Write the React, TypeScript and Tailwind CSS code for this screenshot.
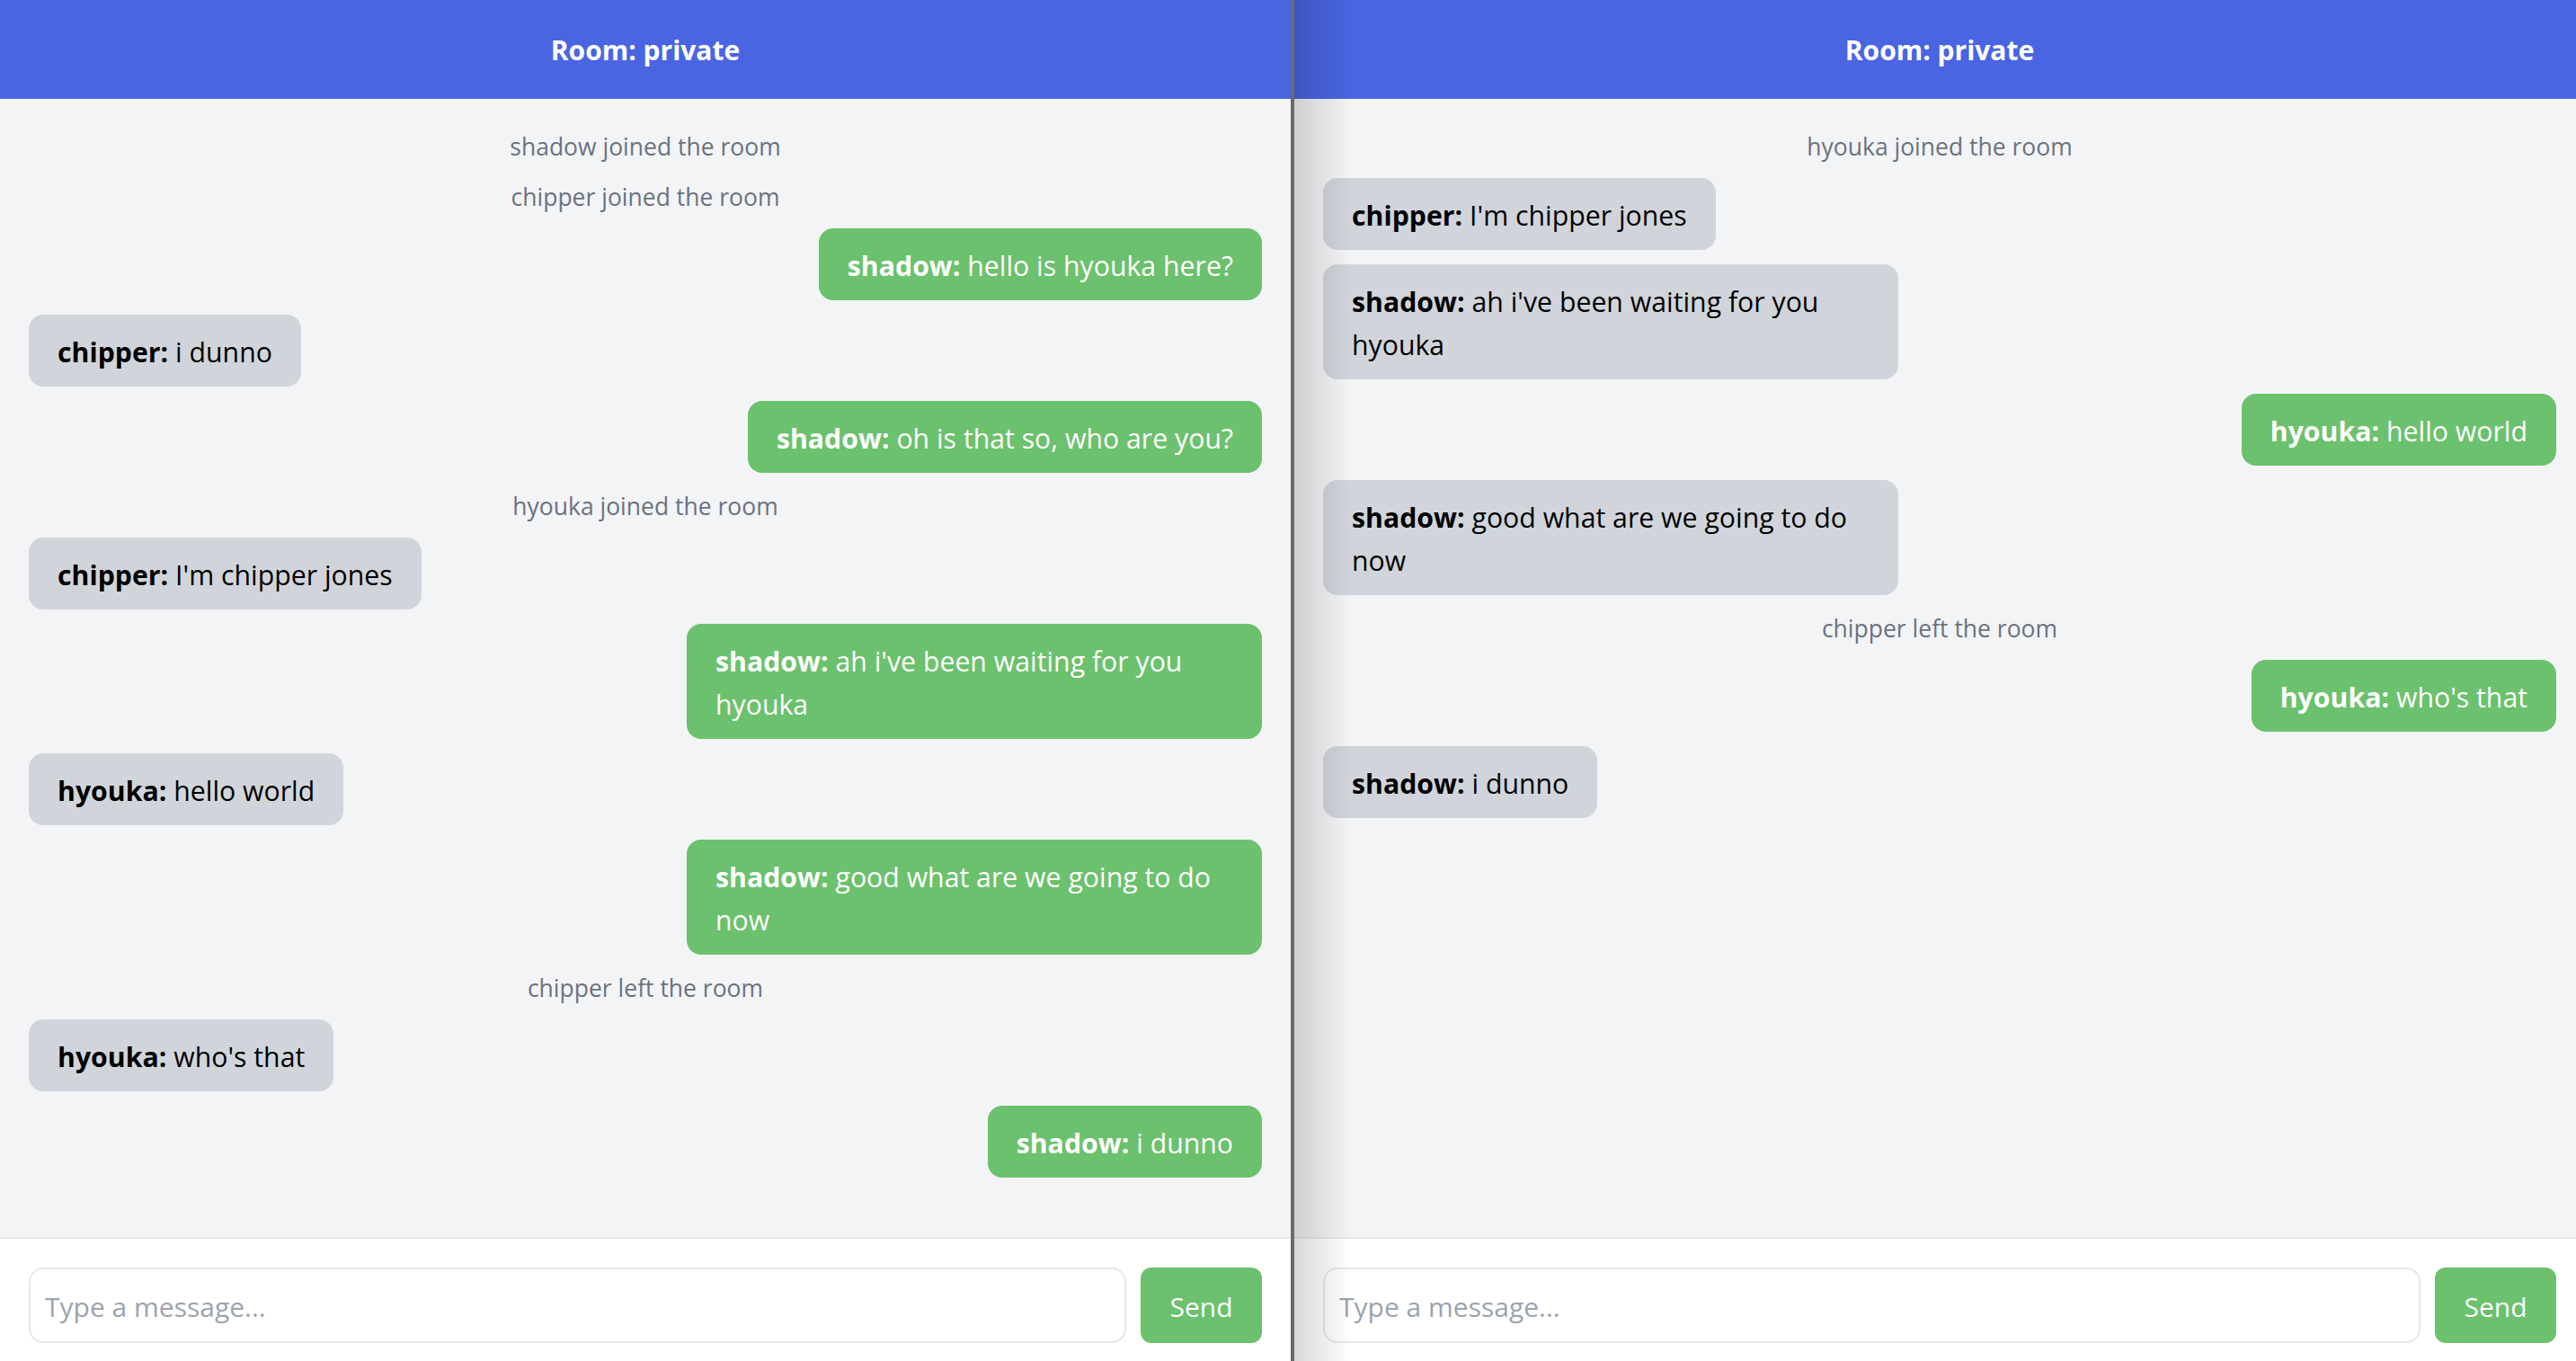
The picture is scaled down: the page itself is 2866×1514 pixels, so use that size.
import React from "react";

type Item =
  | { kind: "sys"; text: string }
  | { kind: "me"; name: string; text: string }
  | { kind: "other"; name: string; text: string };

const left: Item[] = [
  { kind: "sys", text: "shadow joined the room" },
  { kind: "sys", text: "chipper joined the room" },
  { kind: "me", name: "shadow", text: "hello is hyouka here?" },
  { kind: "other", name: "chipper", text: "i dunno" },
  { kind: "me", name: "shadow", text: "oh is that so, who are you?" },
  { kind: "sys", text: "hyouka joined the room" },
  { kind: "other", name: "chipper", text: "I'm chipper jones" },
  { kind: "me", name: "shadow", text: "ah i've been waiting for you hyouka" },
  { kind: "other", name: "hyouka", text: "hello world" },
  { kind: "me", name: "shadow", text: "good what are we going to do now" },
  { kind: "sys", text: "chipper left the room" },
  { kind: "other", name: "hyouka", text: "who's that" },
  { kind: "me", name: "shadow", text: "i dunno" },
];

const right: Item[] = [
  { kind: "sys", text: "hyouka joined the room" },
  { kind: "other", name: "chipper", text: "I'm chipper jones" },
  { kind: "other", name: "shadow", text: "ah i've been waiting for you hyouka" },
  { kind: "me", name: "hyouka", text: "hello world" },
  { kind: "other", name: "shadow", text: "good what are we going to do now" },
  { kind: "sys", text: "chipper left the room" },
  { kind: "me", name: "hyouka", text: "who's that" },
  { kind: "other", name: "shadow", text: "i dunno" },
];

function Row({ item }: { item: Item }) {
  if (item.kind === "sys") {
    return (
      <div className="self-center pt-[2px] text-[26.5px] leading-[38px] text-[#6b7280]">
        {item.text}
      </div>
    );
  }
  if (item.kind === "me") {
    return (
      <div className="self-end max-w-[640px] rounded-[16px] bg-[#6bc16d] px-[32px] pt-[18px] pb-[14px] text-[30.25px] leading-[48px] text-white">
        <span className="font-bold">{item.name}:</span> {item.text}
      </div>
    );
  }
  return (
    <div className="self-start max-w-[640px] rounded-[16px] bg-[#d1d5db] px-[32px] pt-[18px] pb-[14px] text-[30.25px] leading-[48px] text-black">
      <span className="font-bold">{item.name}:</span> {item.text}
    </div>
  );
}

function Panel({ items }: { items: Item[] }) {
  return (
    <div className="flex h-full w-[1436px] shrink-0 flex-col bg-white">
      <div className="flex h-[110px] shrink-0 items-center justify-center bg-[#4a65e2]">
        <span className="text-[30px] font-bold text-white">Room: private</span>
      </div>
      <div className="flex flex-1 flex-col gap-[16px] overflow-hidden bg-[#f3f4f6] px-[32px] pt-[32px]">
        {items.map((it, i) => (
          <Row key={i} item={it} />
        ))}
      </div>
      <div className="flex shrink-0 gap-[16px] border-t-2 border-[#e5e7eb] bg-white px-[32px] pt-[32px] pb-[20px]">
        <input
          className="h-[84px] min-w-0 flex-1 rounded-[16px] border-2 border-[#e5e7eb] bg-white px-[16px] pt-[2px] text-[30px] text-black outline-none placeholder:text-[#9ca3af]"
          placeholder="Type a message..."
        />
        <button className="h-[84px] w-[135px] shrink-0 rounded-[12px] bg-[#6bc16d] pt-[2px] text-[30px] text-white">
          Send
        </button>
      </div>
    </div>
  );
}

export default function App() {
  return (
    <div className="h-[1514px] w-[2866px] overflow-hidden font-['Open_Sans',sans-serif]">
      <div className="flex h-full w-[2876px]">
        <Panel items={left} />
        <div className="w-[4px] shrink-0 bg-[#6b6b6b]" />
        <div className="relative h-full w-[1436px] shrink-0">
          <Panel items={right} />
          <div className="pointer-events-none absolute inset-y-0 left-0 w-[64px] bg-linear-to-r from-black/15 to-transparent" />
        </div>
      </div>
    </div>
  );
}
